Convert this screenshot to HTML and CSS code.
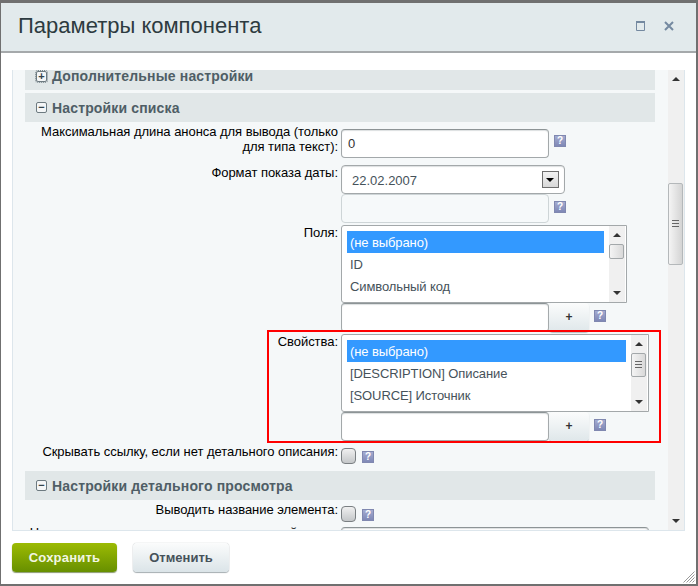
FILE: index.html
```html
<!DOCTYPE html>
<html lang="ru">
<head>
    <meta charset="UTF-8">
    <meta name="viewport" content="width=device-width, initial-scale=1.0">
    <title>Параметры компонента</title>
    <link rel="stylesheet" href="styles.css">
</head>
<body>
    <div class="dialog">
        <div class="dialog-head">
            <h1 class="dialog-title">Параметры компонента</h1>
            <svg class="head-icon" width="10" height="10" viewBox="0 0 10 10"><path d="M.5 1.5h8v8h-8z" fill="none" stroke="#7489a0"/><path d="M0 0h9v2H0z" fill="#7489a0"/></svg>
            <svg class="head-icon head-close" width="10" height="10" viewBox="0 0 10 10"><path d="M1 1l8 8M9 1L1 9" fill="none" stroke="#7489a0" stroke-width="2"/></svg>
        </div>

        <div class="panel">
            <div class="panel-scroll">
                <div class="section section-clipped">
                    <span class="toggle toggle-dotted">+</span>Дополнительные настройки
                </div>
                <div class="section">
                    <span class="toggle">−</span>Настройки списка
                </div>

                <div class="row row-first">
                    <div class="row-label">Максимальная длина анонса для вывода (только для типа текст):</div>
                    <div class="row-field">
                        <input class="text-input" type="text" value="0">
                        <span class="help">?</span>
                    </div>
                </div>

                <div class="row">
                    <div class="row-label">Формат показа даты:</div>
                    <div class="row-field-stack">
                        <div class="select-box">
                            <span class="select-value">22.02.2007</span>
                            <span class="select-arrow"></span>
                        </div>
                        <div class="row-field">
                            <input class="text-input text-input-off" type="text" disabled>
                            <span class="help">?</span>
                        </div>
                    </div>
                </div>

                <div class="row row-list">
                    <div class="row-label">Поля:</div>
                    <div class="row-field-stack">
                        <div class="list-box list-short">
                            <ul class="list-items">
                                <li class="selected">(не выбрано)</li>
                                <li>ID</li>
                                <li>Символьный код</li>
                            </ul>
                            <div class="list-scroll">
                                <span class="arrow-up"></span>
                                <span class="list-thumb list-thumb-plain"></span>
                                <span class="arrow-down"></span>
                            </div>
                        </div>
                        <div class="row-field">
                            <input class="text-input" type="text">
                            <button class="plus-btn" type="button">+</button>
                            <span class="help">?</span>
                        </div>
                    </div>
                </div>

                <div class="row row-list">
                    <div class="row-label">Свойства:</div>
                    <div class="row-field-stack">
                        <div class="list-box list-wide">
                            <ul class="list-items">
                                <li class="selected">(не выбрано)</li>
                                <li>[DESCRIPTION] Описание</li>
                                <li>[SOURCE] Источник</li>
                            </ul>
                            <div class="list-scroll">
                                <span class="arrow-up"></span>
                                <span class="list-thumb"></span>
                                <span class="arrow-down"></span>
                            </div>
                        </div>
                        <div class="row-field">
                            <input class="text-input" type="text">
                            <button class="plus-btn" type="button">+</button>
                            <span class="help">?</span>
                        </div>
                    </div>
                    <div class="highlight"></div>
                </div>

                <div class="row row-check">
                    <div class="row-label">Скрывать ссылку, если нет детального описания:</div>
                    <div class="row-field">
                        <span class="check"></span>
                        <span class="help">?</span>
                    </div>
                </div>

                <div class="section section-detail">
                    <span class="toggle">−</span>Настройки детального просмотра
                </div>

                <div class="row row-check">
                    <div class="row-label">Выводить название элемента:</div>
                    <div class="row-field">
                        <span class="check"></span>
                        <span class="help">?</span>
                    </div>
                </div>

                <div class="row row-last">
                    <div class="row-label">Название элемента в заголовке к детальной части:</div>
                    <div class="row-field">
                        <input class="text-input text-input-long" type="text">
                    </div>
                </div>
            </div>

            <div class="main-scroll">
                <span class="arrow-up"></span>
                <span class="main-thumb"></span>
                <span class="arrow-down"></span>
            </div>
        </div>

        <div class="dialog-foot">
            <button class="btn btn-save" type="button">Сохранить</button>
            <button class="btn btn-cancel" type="button">Отменить</button>
        </div>
        <svg class="resize-grip" width="12" height="12" viewBox="0 0 12 12"><path d="M11.5 .5l-11 11M11.5 3.5l-8 8M11.5 6.5l-5 5M11.5 9.5l-2 2" stroke="#9a9a9a" fill="none"/></svg>
    </div>
</body>
</html>
```
FILE: styles.css
```css
* {
    box-sizing: border-box;
}

html, body {
    margin: 0;
    padding: 0;
}

body {
    width: 698px;
    height: 586px;
    overflow: hidden;
    font-family: "Liberation Sans", Arial, sans-serif;
    font-size: 13px;
    color: #000;
    background-color: #fff;
}

.dialog {
    position: relative;
    display: flex;
    flex-direction: column;
    width: 698px;
    height: 586px;
    border: 1px solid #707070;
    border-top: 3px solid #707070;
    border-bottom: 2px solid #707070;
    border-right: 2px solid #707070;
    background-color: #fff;
}

/* head */
.dialog-head {
    display: flex;
    align-items: center;
    height: 50px;
    padding: 0 22px 3px 17px;
    background-color: #e2eaec;
    border-bottom: 2px solid #a5a9ab;
}

.dialog-title {
    flex: 1;
    margin: 0;
    font-size: 22px;
    font-weight: normal;
    color: #2d3b40;
}

.head-icon {
    display: block;
}

.head-close {
    margin-left: 18px;
}

/* panel */
.panel {
    display: flex;
    height: 461px;
    margin: 17px 11px 0 11px;
    border: 1px solid #dde6ec;
    border-top: 0;
    background-color: #f5f8f9;
}

.panel-scroll {
    flex: 1;
    height: 100%;
    padding: 0 0 0 12px;
    overflow: hidden;
}

.section {
    display: flex;
    align-items: center;
    width: 630px;
    height: 29px;
    padding-left: 11px;
    margin-bottom: 2px;
    background-color: #e1e7e8;
    font-size: 14px;
    font-weight: bold;
    letter-spacing: 0.15px;
    color: #4f5e66;
}

.section-clipped {
    align-items: flex-start;
    height: 20px;
    margin-bottom: 3px;
    line-height: 13px;
}

.section-clipped .toggle {
    margin-top: 1px;
}

.section-detail {
    margin-top: 5px;
    margin-bottom: -1px;
}

.toggle {
    display: flex;
    align-items: center;
    justify-content: center;
    width: 11px;
    height: 11px;
    margin-right: 5px;
    border: 1px solid #6d7a80;
    border-radius: 2px;
    background-color: #f4f6f7;
    color: #33424a;
    font-size: 11px;
    line-height: 9px;
    font-weight: bold;
}

.toggle-dotted {
    outline: 1px dotted #7a868c;
}

/* rows */
.row {
    position: relative;
    display: flex;
    align-items: flex-start;
}

.row-label {
    flex: none;
    width: 313px;
    padding-left: 5px;
    text-align: right;
    line-height: 15px;
    letter-spacing: -0.04px;
}

.row-field {
    display: flex;
    align-items: flex-start;
    margin-left: 3px;
    gap: 5px;
}

.row-field-stack {
    display: flex;
    flex-direction: column;
    margin-left: 3px;
}

.row-field-stack .row-field {
    margin-left: 0;
}

.row-first {
    margin-bottom: 7px;
}

.row-first .row-field {
    margin-top: 5px;
}

.row-first .help {
    margin-top: 6px;
}

.row-list {
    margin-top: 2px;
}

.row-check {
    height: 22px;
    margin-top: 3px;
}

.row-check .row-field {
    margin-top: 4px;
}

.row-check .help {
    margin-top: 3px;
}

.row-last {
    margin-top: 1px;
}

.row-last .row-label {
    padding-left: 0;
}

.row-last .row-field {
    margin-top: 2px;
}

/* inputs */
.text-input {
    width: 208px;
    height: 29px;
    padding: 0 6px;
    border: 1px solid #a3a8aa;
    border-top-color: #8d9496;
    border-radius: 4px;
    background-color: #fff;
    box-shadow: inset 0 1px 1px #dcdfe0;
    font-family: inherit;
    font-size: 13px;
    color: #333;
}

.text-input-off {
    border-color: #ced5d7;
    background-color: #f6f9fa;
    box-shadow: none;
}

.text-input-long {
    width: 308px;
}

.select-box {
    display: flex;
    align-items: center;
    justify-content: space-between;
    width: 224px;
    height: 29px;
    padding: 0 5px 0 10px;
    border: 1px solid #a3a8aa;
    border-radius: 4px;
    background-color: #fff;
    box-shadow: inset 0 1px 1px #dcdfe0;
    color: #46525a;
}

.select-value {
    padding-top: 2px;
}

.select-arrow {
    position: relative;
    width: 17px;
    height: 17px;
    border: 1px solid #6e6e6e;
    background: linear-gradient(to bottom, #f2f2f2, #d8d8d8);
}

.select-arrow::after {
    content: "";
    position: absolute;
    left: 3px;
    top: 6px;
    border: 4px solid transparent;
    border-top: 4px solid #000;
    border-bottom: 0;
}

.list-box {
    display: flex;
    height: 78px;
    padding: 5px 1px 1px 5px;
    border: 1px solid #a3a8aa;
    border-radius: 3px 0 0 3px;
    background-color: #fff;
}

.list-short {
    width: 286px;
}

.list-wide {
    width: 308px;
}

.list-items {
    flex: 1;
    margin: 0;
    padding: 0;
    list-style: none;
    color: #46525a;
    letter-spacing: -0.1px;
}

.list-items li {
    height: 22px;
    padding-left: 3px;
    line-height: 24px;
}

.list-items .selected {
    background-color: #3399ff;
    color: #fff;
}

.list-scroll {
    position: relative;
    flex: none;
    width: 16px;
    height: 76px;
    margin: -5px 0 0 5px;
    background-color: #f0f0f0;
}

.list-thumb {
    position: absolute;
    left: 0;
    top: 18px;
    width: 15px;
    height: 24px;
    border: 1px solid #a3a8aa;
    border-radius: 2px;
    background: linear-gradient(to right, #f4f4f4, #d9d9d9);
}

.list-thumb::after {
    content: "";
    position: absolute;
    left: 3px;
    top: 7px;
    width: 7px;
    height: 7px;
    background: repeating-linear-gradient(to bottom, #666 0, #666 1px, transparent 1px, transparent 3px);
}

.list-thumb-plain {
    height: 15px;
}

.list-thumb-plain::after {
    display: none;
}

.arrow-up, .arrow-down {
    position: absolute;
    left: 4px;
    width: 0;
    height: 0;
    border-left: 4px solid transparent;
    border-right: 4px solid transparent;
}

.arrow-up {
    top: 7px;
    border-bottom: 4px solid #333;
}

.arrow-down {
    bottom: 7px;
    border-top: 4px solid #333;
}

.plus-btn {
    width: 40px;
    height: 29px;
    margin-left: -5px;
    padding: 0 0 2px;
    border: 0;
    border-radius: 4px;
    background: linear-gradient(to bottom, #fbfcfc, #dfe7ea);
    box-shadow: 0 1px 1px #b8bfc2;
    font-family: inherit;
    font-size: 12px;
    font-weight: bold;
    color: #333;
}

.help {
    flex: none;
    width: 12px;
    height: 12px;
    margin-top: 7px;
    border: 1px solid #8088b0;
    background: linear-gradient(to bottom, #a4abd0, #7f88b6);
    color: #fff;
    font-size: 10px;
    line-height: 10px;
    font-weight: bold;
    text-align: center;
}

.check {
    flex: none;
    width: 15px;
    height: 16px;
    margin-right: 1px;
    border: 1px solid #7a7f82;
    border-radius: 4px;
    background: linear-gradient(to bottom, #f0f0f0, #c4c7c9);
}

.highlight {
    position: absolute;
    left: 242px;
    top: -4px;
    width: 394px;
    height: 113px;
    border: 2px solid #ff0000;
    pointer-events: none;
}

/* main scrollbar */
.main-scroll {
    position: relative;
    flex: none;
    width: 16px;
    height: 100%;
    background-color: #f0f0f0;
}

.main-thumb {
    position: absolute;
    left: 0;
    top: 113px;
    width: 15px;
    height: 82px;
    border: 1px solid #b4b8ba;
    border-radius: 2px;
    background: linear-gradient(to right, #f4f4f4, #d4d4d4);
}

.main-thumb::after {
    content: "";
    position: absolute;
    left: 3px;
    top: 36px;
    width: 7px;
    height: 7px;
    background: repeating-linear-gradient(to bottom, #666 0, #666 1px, transparent 1px, transparent 3px);
}

/* foot */
.dialog-foot {
    display: flex;
    align-items: flex-start;
    gap: 16px;
    padding: 12px 0 0 11px;
}

.btn {
    height: 29px;
    padding: 0;
    border: 0;
    border-radius: 4px;
    font-family: inherit;
    font-size: 13px;
    font-weight: bold;
}

.btn-save {
    width: 105px;
    background: linear-gradient(to bottom, #9cbb03, #678f00);
    box-shadow: 0 1px 1px #8a9a70;
    color: #f2f6e4;
    letter-spacing: 0.2px;
}

.btn-cancel {
    width: 96px;
    background: linear-gradient(to bottom, #fbfcfc, #dbe4e8);
    box-shadow: 0 0 1px #9aa2a6, 0 1px 1px #a8b0b4;
    color: #46525a;
}

.resize-grip {
    position: absolute;
    right: 1px;
    bottom: 1px;
}
```
